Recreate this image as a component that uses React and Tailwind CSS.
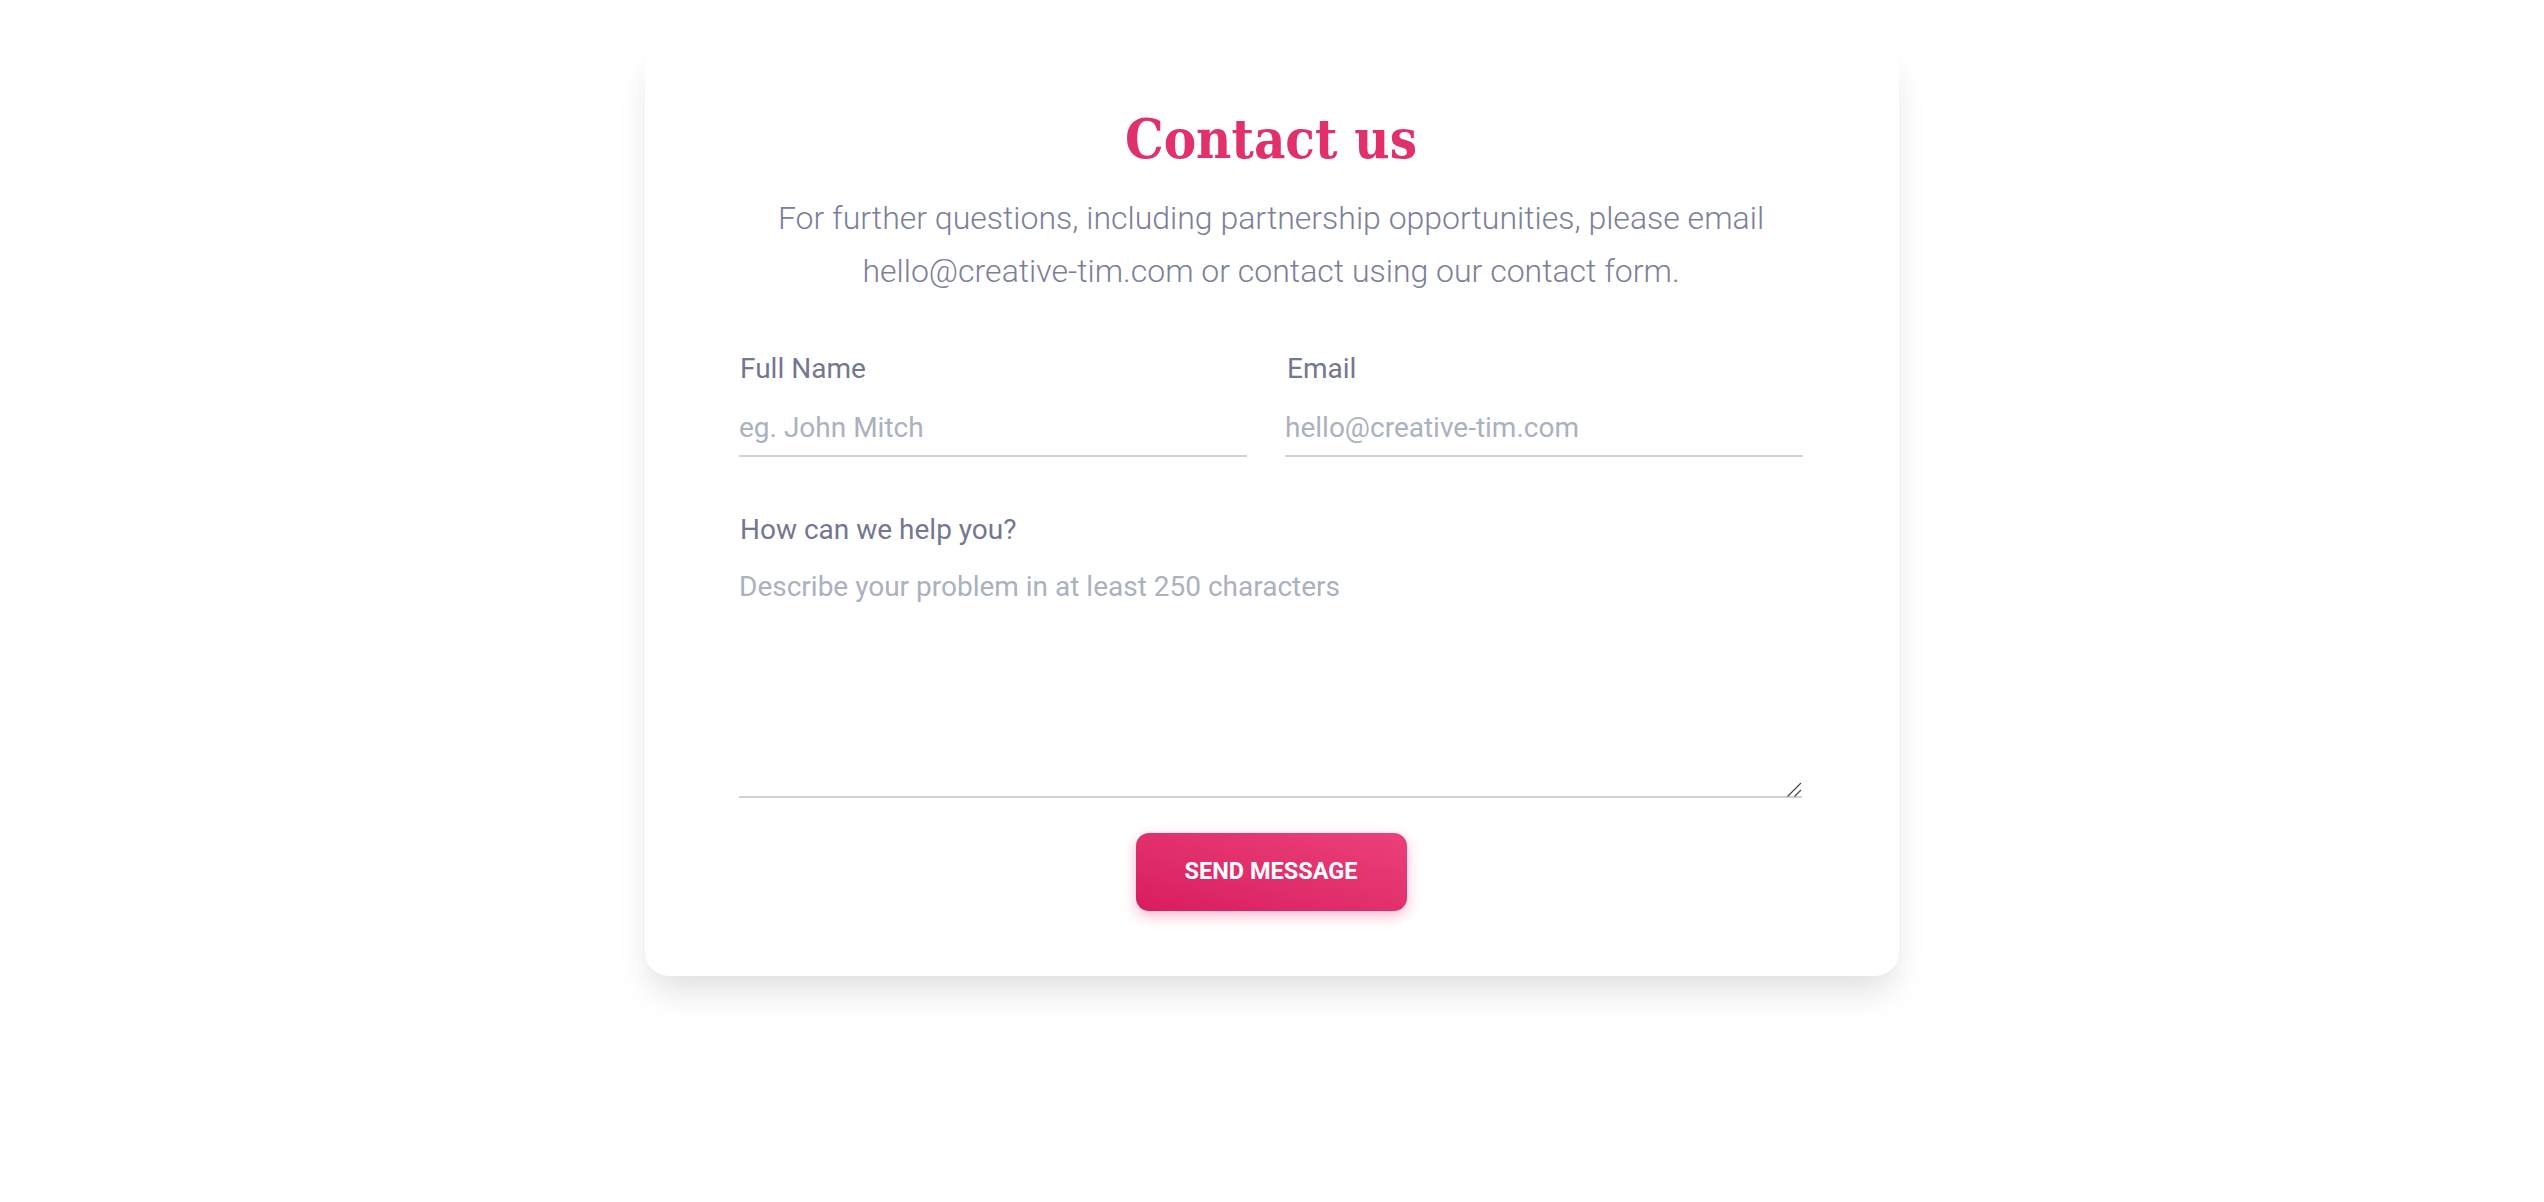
export default function App() {
  return (
    <div className="min-h-screen bg-white pt-[44px]" style={{ fontFamily: "Roboto, 'Noto Sans', sans-serif" }}>
      <div className="mx-auto w-[1254px] rounded-[24px] bg-white pl-[94px] pr-[96px] pt-[63px] pb-[65px] shadow-[0_20px_34px_-6px_rgba(0,0,0,0.13)]">
        <h2
          className="text-center text-[54px] font-bold leading-[65px] text-[#e0316c]"
          style={{ fontFamily: "'Roboto Slab', 'DejaVu Serif', serif", fontStretch: "condensed" }}
        >
          Contact us
        </h2>
        <p className="mt-[20px] text-center text-[32px] font-light leading-[53px] text-[#7b809a]">
          For further questions, including partnership opportunities, please email hello@creative-tim.com or contact using our contact form.
        </p>

        <form className="mt-[53px]" onSubmit={(e) => e.preventDefault()}>
          <div className="grid grid-cols-[508px_518px] gap-x-[38px]">
            <div>
              <label className="block pl-[1px] text-[28px] leading-[36px] text-[#737791]">Full Name</label>
              <input
                type="text"
                placeholder="eg. John Mitch"
                className="mt-[23px] block w-full border-b-2 border-[#d2d2d2] bg-transparent pb-[9px] text-[28px] leading-[36px] text-[#495057] outline-none placeholder:text-[#aab1bf]"
              />
            </div>
            <div>
              <label className="block pl-[2px] text-[28px] leading-[36px] text-[#737791]">Email</label>
              <input
                type="email"
                placeholder="hello@creative-tim.com"
                className="mt-[23px] block w-full border-b-2 border-[#d2d2d2] bg-transparent pb-[9px] text-[28px] leading-[36px] text-[#495057] outline-none placeholder:text-[#aab1bf]"
              />
            </div>
          </div>

          <div className="mt-[55px]">
            <label className="block pl-[1px] text-[28px] leading-[36px] text-[#737791]">How can we help you?</label>
            <div className="relative mt-[21px] w-[1063px]">
              <textarea
                placeholder="Describe your problem in at least 250 characters"
                className="block h-[229px] w-full resize-none border-b-2 border-[#d2d2d2] bg-transparent text-[28px] leading-[36px] text-[#495057] outline-none placeholder:text-[#aab1bf]"
              />
              {/* resize grip */}
              <svg className="pointer-events-none absolute bottom-[1px] right-0 h-[16px] w-[16px]" viewBox="0 0 16 16" fill="none">
                <path d="M1.5 15.5 L15 2" stroke="#4a4a4a" strokeWidth="1.3" />
                <path d="M8.5 15.5 L15 9" stroke="#4a4a4a" strokeWidth="1.3" />
              </svg>
            </div>
          </div>

          <div className="mt-[35px] flex justify-center">
            <button
              type="submit"
              className="h-[78px] w-[271px] rounded-[13px] bg-linear-to-tr from-[#d81b60] to-[#ec407a] text-[23.5px] font-bold uppercase text-white shadow-[0_5px_14px_rgba(233,30,99,0.3)]"
            >
              Send Message
            </button>
          </div>
        </form>
      </div>
    </div>
  );
}
